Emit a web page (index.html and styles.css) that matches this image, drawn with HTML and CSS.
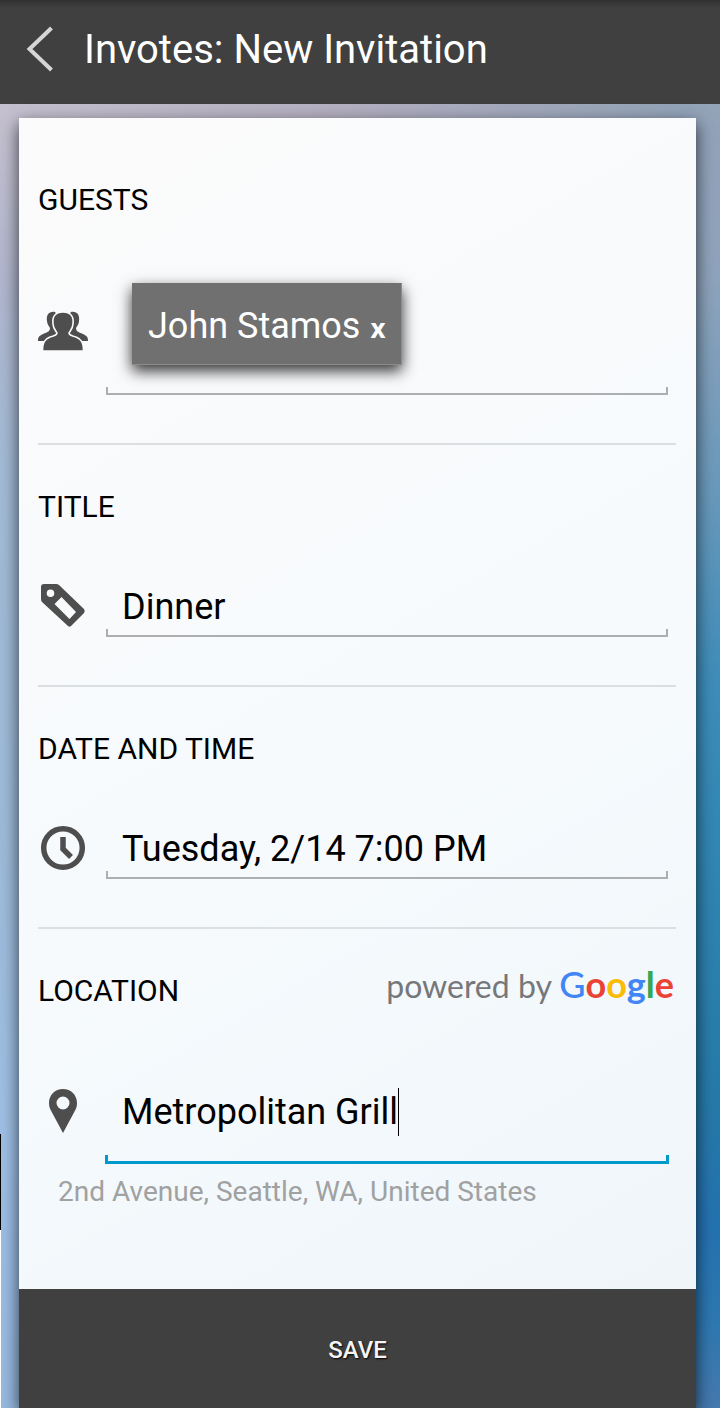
FILE: index.html
```html
<!DOCTYPE html>
<html lang="en">
<head>
    <meta charset="UTF-8">
    <meta name="viewport" content="width=device-width, initial-scale=1.0">
    <title>Invotes: New Invitation</title>
    <link rel="stylesheet" href="styles.css">
</head>
<body>
    <header>
        <button type="button" class="back-btn" aria-label="Back">
            <svg width="26" height="44" viewBox="0 0 26 44" fill="none" stroke="#d6d6d6" stroke-width="4">
                <path d="M23.500 0 L1.500 21 L23.500 42"/>
            </svg>
        </button>
        <h1>Invotes: New Invitation</h1>
    </header>

    <form class="card">
        <!-- Guests -->
        <section class="group guests">
            <h2><label for="guest-remove">GUESTS</label></h2>
            <div class="row">
                <svg class="icon" viewBox="0 0 50 44" fill="#4e4e4e">
                    <path d="M17 1 C11 0 8 4 9 10 C9 13 11 15 12 17 C12 20 10 21 5 23 C1 25 0 26 0 30 L12 30 L26 23 L38 30 L50 30 C50 26 49 25 45 23 C40 21 38 20 38 17 C39 15 41 13 41 10 C42 4 39 0 33 1 L30 5 L20 5 Z"/>
                    <path stroke="#f9fbfd" stroke-width="1.6" d="M25 1 C17 1 14 6 15 13 C15 17 18 20 19 22 C19 24 16 25 12 26 C7 28 4.500 31 4.500 40 L45.500 40 C45.500 31 43 28 38 26 C34 25 31 24 31 22 C32 20 35 17 35 13 C36 6 33 1 25 1 Z"/>
                </svg>
                <div class="field">
                    <div class="guest-list">
                        <span class="chip">John Stamos <button type="button" id="guest-remove" aria-label="Remove John Stamos">x</button></span>
                    </div>
                </div>
            </div>
        </section>

        <!-- Title -->
        <section class="group">
            <h2><label for="title">TITLE</label></h2>
            <div class="row">
                <svg class="icon" viewBox="0 0 50 44" fill="#4e4e4e">
                    <path fill-rule="evenodd" d="M6 -1 H18 Q20 -1 21 0 L46 24 Q47.500 26 46 28 L33 41 Q31.500 42.500 30 41 L4 17 Q3 16 3 14 V2 Q3 -1 6 -1 Z M12.500 4.500 A3.800 3.800 0 1 0 12.500 12.100 A3.800 3.800 0 1 0 12.500 4.500 Z M23.500 12 L16.500 19 L31.500 34 L38 27 Z"/>
                </svg>
                <div class="field">
                    <input type="text" id="title" value="Dinner">
                </div>
            </div>
        </section>

        <!-- Date and time -->
        <section class="group">
            <h2><label for="date">DATE AND TIME</label></h2>
            <div class="row">
                <svg class="icon" viewBox="0 0 50 44" fill="none" stroke="#4e4e4e">
                    <circle cx="25" cy="21" r="19.300" stroke-width="5.500"/>
                    <path d="M25 10 V22 L33 30" stroke-width="5.500"/>
                </svg>
                <div class="field">
                    <input type="text" id="date" value="Tuesday, 2/14 7:00 PM">
                </div>
            </div>
        </section>

        <!-- Location -->
        <section class="group location">
            <div class="heading">
                <h2><label for="location">LOCATION</label></h2>
                <p class="powered">powered by
                    <span class="google"><span class="blue cap">G</span><span class="red">o</span><span class="yellow">o</span><span class="blue">g</span><span class="green">l</span><span class="red">e</span></span>
                </p>
            </div>
            <div class="row">
                <svg class="icon" viewBox="0 0 50 44" fill="#4e4e4e">
                    <path fill-rule="evenodd" d="M25 -2 C17 -2 11 4 11 12 C11 16 12 18 14 21.500 L25 42 L36 21.500 C38 18 39 16 39 12 C39 4 33 -2 25 -2 Z M25 5.500 A6.500 6.500 0 1 1 25 18.500 A6.500 6.500 0 1 1 25 5.500 Z"/>
                </svg>
                <div class="field active">
                    <div class="input-line">
                        <input type="text" id="location" value="Metropolitan Grill">
                        <span class="caret"></span>
                    </div>
                </div>
            </div>
            <p class="address">2nd Avenue, Seattle, WA, United States</p>
        </section>

        <button type="submit" class="save-btn">SAVE</button>
    </form>
</body>
</html>
```

FILE: styles.css
```css
:root {
    --dark: #404040;
    --line: #acaeb0;
    --divider: #dcdfe1;
    --active: #0099cc;
}

* {
    margin: 0;
    padding: 0;
    box-sizing: border-box;
    font-family: Roboto, sans-serif;
}

body {
    display: flex;
    flex-direction: column;
    position: relative;
    min-height: 100vh;
    background:
        linear-gradient(to right, #c5c0cf, #b5b0c1 45%, #93a3b8 95%) top / 100% 120px no-repeat,
        linear-gradient(#93a3b9 8%, #8ea3bc 20%, #6698bb 36%, #3f8dba 48%, #3388b5 58%, #267aa9 78%, #2472b1 87%, #2e78b1 94%, #4679af 100%) right / 50% 100% no-repeat,
        linear-gradient(#c5c0cf 8%, #b0b6cd 20%, #a2bad5 33%, #9dbbd9 60%, #9ebfe5 82%, #98bae0 100%);
}

/* scroll track at the left edge */
body::before {
    content: "";
    position: absolute;
    left: 0;
    bottom: 0;
    width: 1px;
    height: 274px;
    background: linear-gradient(#000 96px, #fff 96px);
}

header {
    display: flex;
    align-items: center;
    height: 104px;
    padding: 0 28px 4px;
    background: linear-gradient(#303030, var(--dark) 8px);
    color: #fff;
}

h1 {
    font-size: 40px;
    font-weight: 400;
    line-height: 48px;
}

.back-btn {
    display: flex;
    width: 56px;
    border: none;
    background: none;
    cursor: pointer;
}

.back-btn svg {
    overflow: visible;
}

.card {
    display: flex;
    flex-direction: column;
    flex: 1;
    margin: 14px 24px 0 19px;
    background: linear-gradient(150deg, #fbfbfb, #f9fafc 25%, #f6fafd 55%, #eef5f9);
    box-shadow: 0 6px 16px rgba(0, 0, 0, 0.7);
}

.group {
    margin: 0 20px 0 19px;
    padding: 44px 0 48px;
    border-bottom: 2px solid var(--divider);
}

.guests {
    padding-top: 64px;
}

.location {
    padding-bottom: 79px;
    border-bottom: none;
}

h2 {
    font-size: 30px;
    font-weight: 400;
    line-height: 36px;
    color: #000;
}

.heading {
    display: flex;
    justify-content: space-between;
    height: 36px;
    padding-right: 2px;
}

.row {
    display: flex;
    align-items: center;
    gap: 18px;
    margin: 60px 8px 0 0;
}

.icon {
    flex: none;
    width: 50px;
    height: 44px;
    margin-bottom: 8px;
    overflow: visible;
}

.field {
    flex: 1;
    min-width: 0;
}

.field::after {
    content: "";
    display: block;
    height: 6px;
    border: 2px solid var(--line);
    border-top: none;
}

.field.active {
    margin: 0 -1px;
}

.field.active::after {
    border-color: var(--active);
    border-width: 0 3px 3px;
}

input {
    display: block;
    width: 100%;
    height: 44px;
    padding-left: 16px;
    border: none;
    outline: none;
    background: none;
    font-size: 36px;
    color: #000;
}

.input-line {
    display: flex;
    align-items: center;
    height: 86px;
    padding-left: 1px;
}

.input-line input {
    width: auto;
    field-sizing: content;
}

.caret {
    width: 1px;
    height: 48px;
    background: #000;
}

.guest-list {
    padding: 5px 26px 22px;
}

.chip {
    display: inline-flex;
    align-items: center;
    gap: 10px;
    height: 82px;
    padding: 4px 16px 0;
    border: 1px solid #8c8c8c;
    border-width: 0 1px 1px 0;
    background: #707070;
    box-shadow: 0 6px 14px rgba(0, 0, 0, 0.8);
    font-size: 36px;
    color: #fff;
    vertical-align: top;
}

.chip button {
    padding-top: 5px;
    border: none;
    background: none;
    font-family: "Open Sans", sans-serif;
    font-size: 26px;
    font-weight: 700;
    line-height: 36px;
    color: #fff;
    cursor: pointer;
}

.powered {
    font-family: Lato, sans-serif;
    font-size: 32px;
    line-height: 22px;
    color: #757779;
}

.google,
.google span {
    font-family: Lato, sans-serif;
    font-size: 36px;
    font-weight: 700;
}

.google .cap {
    font-weight: 500;
}

.blue {
    color: #4285f4;
}

.red {
    color: #ea4335;
}

.yellow {
    color: #fbbc05;
}

.green {
    color: #34a853;
}

.address {
    margin-top: 10px;
    padding-left: 20px;
    font-size: 28px;
    line-height: 36px;
    color: #a0a1a2;
}

.save-btn {
    flex: 1;
    min-height: 119px;
    padding-top: 2px;
    border: none;
    background: var(--dark);
    font-size: 24px;
    font-weight: 500;
    color: #f4f4f4;
    text-shadow: 1px 1px 2px #000;
    cursor: pointer;
}
```
